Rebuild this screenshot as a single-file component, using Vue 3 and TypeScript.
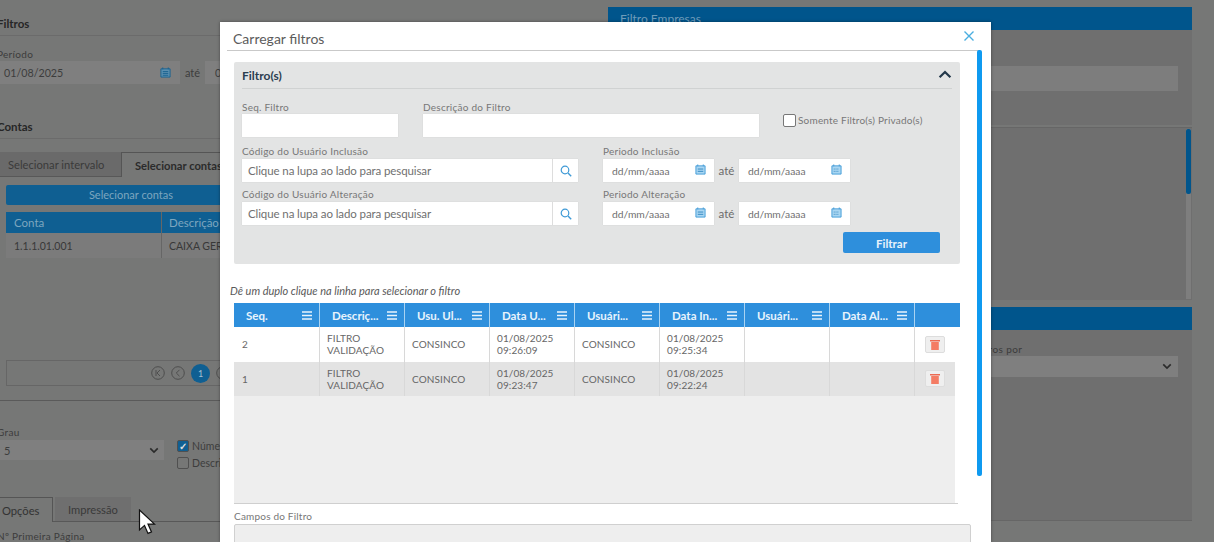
<script setup lang="ts">
interface Row { seq: string; user1: string; d1: string[]; d2: string[] }
const cols: string[] = ['Seq.', 'Descriç...', 'Usu. Ul...', 'Data U...', 'Usuári...', 'Data In...', 'Usuári...', 'Data Al...']
const rows: Row[] = [
  { seq: '2', user1: 'CONSINCO', d1: ['01/08/2025', '09:26:09'], d2: ['01/08/2025', '09:25:34'] },
  { seq: '1', user1: 'CONSINCO', d1: ['01/08/2025', '09:23:47'], d2: ['01/08/2025', '09:22:24'] },
]
const lookups = [
  { label: 'Código do Usuário Inclusão', period: 'Periodo Inclusão' },
  { label: 'Código do Usuário Alteração', period: 'Periodo Alteração' },
]
</script>

<template>
  <div class="page">
    <section class="left">
      <div class="sec-title first">Filtros</div>
      <div class="lbl period-lbl">Período</div>
      <div class="date-row">
        <div class="bg-input wide">01/08/2025
          <svg class="cal" viewBox="0 0 12 12"><path d="M1 2h10v9H1z" fill="#5a8fb0" stroke="#17608f"/><path d="M3 .5v2M9 .5v2" stroke="#17608f"/><path d="M3 5h6M3 7h6M3 9h6" stroke="#17608f"/></svg>
        </div>
        <span class="ate">até</span>
        <div class="bg-input rest">0</div>
      </div>
      <div class="sec-title contas">Contas</div>
      <div class="bg-tabs">
        <span class="bg-tab">Selecionar intervalo</span>
        <span class="bg-tab on">Selecionar contas</span>
      </div>
      <div class="inset">
        <div class="bg-btn">Selecionar contas</div>
        <div class="bg-head"><span class="c1">Conta</span><span class="c2">Descrição</span></div>
        <div class="bg-row"><span class="c1">1.1.1.01.001</span><span class="c2">CAIXA GERAL</span></div>
        <div class="pager">
          <svg class="pg" viewBox="0 0 14 14"><circle cx="7" cy="7" r="6.300" fill="none" stroke="#4e4e4e"/><path d="M5 4v6M9 4 6 7l3 3" fill="none" stroke="#4e4e4e"/></svg>
          <svg class="pg" viewBox="0 0 14 14"><circle cx="7" cy="7" r="6.300" fill="none" stroke="#4e4e4e"/><path d="M8.500 3.800 5.300 7l3.200 3.200" fill="none" stroke="#4e4e4e"/></svg>
          <span class="pg-cur">1</span>
          <svg class="pg" viewBox="0 0 14 14"><circle cx="7" cy="7" r="6.300" fill="none" stroke="#4e4e4e"/></svg>
        </div>
      </div>
      <div class="divider"></div>
      <div class="lbl grau">Grau</div>
      <div class="grau-row">
        <div class="bg-select">5
          <svg class="chev" viewBox="0 0 12 8"><path d="M1.500 1.500 6 6l4.500-4.500" fill="none" stroke="#2b2b2b" stroke-width="2"/></svg>
        </div>
        <div class="checks">
          <div class="chk-line"><span class="bg-chk on">✓</span>Número</div>
          <div class="chk-line"><span class="bg-chk"></span>Descrição</div>
        </div>
      </div>
      <div class="bg-tabs low">
        <span class="bg-tab on small">Opções</span>
        <span class="bg-tab imp">Impressão</span>
      </div>
      <div class="lbl first-page">Nº Primeira Página</div>
    </section>

    <section class="right">
      <div class="r-head">Filtro Empresas</div>
      <div class="r-body top"><div class="r-input"></div></div>
      <div class="r-list"><div class="r-track"><div class="r-thumb"></div></div></div>
      <div class="r-head second"></div>
      <div class="r-body bottom">
        <div class="r-lbl">Agrupar registros por</div>
        <div class="r-select">
          <svg class="chev" viewBox="0 0 12 8"><path d="M1.500 1.500 6 6l4.500-4.500" fill="none" stroke="#2b2b2b" stroke-width="2"/></svg>
        </div>
      </div>
    </section>

    <svg class="cursor" viewBox="0 0 18 26"><path d="M1.500 1v20l5-4.600 3.500 8 3.500-1.500-3.500-7.800h6.500z" fill="#fff" stroke="#111" stroke-width="1.200"/></svg>

    <div class="modal">
      <header class="m-head">
        <h1>Carregar filtros</h1>
        <svg class="close" viewBox="0 0 12 12"><path d="M1.500 1.500l9 9M10.500 1.500l-9 9" stroke="#4aaee0" stroke-width="1.400" fill="none"/></svg>
      </header>
      <div class="m-scroll"></div>
      <div class="m-body">
        <div class="panel">
          <div class="panel-head">
            <span>Filtro(s)</span>
            <svg viewBox="0 0 12 8"><path d="M1.200 6.500 6 1.800l4.800 4.700" fill="none" stroke="#23384a" stroke-width="2"/></svg>
          </div>
          <div class="f-row r1">
            <div class="field seq"><label>Seq. Filtro</label><div class="inp"></div></div>
            <div class="field desc"><label>Descrição do Filtro</label><div class="inp"></div></div>
            <div class="priv"><span class="box"></span>Somente Filtro(s) Privado(s)</div>
          </div>
          <div v-for="l in lookups" :key="l.label" class="f-row r2">
            <div class="field lookup">
              <label>{{ l.label }}</label>
              <div class="inp text">
                <span class="ph">Clique na lupa ao lado para pesquisar</span>
                <span class="addon">
                  <svg viewBox="0 0 12 12"><circle cx="5" cy="5" r="3.800" fill="none" stroke="#3f9ad6" stroke-width="1.200"/><path d="M8 8l3.200 3.200" stroke="#3f9ad6" stroke-width="1.400"/></svg>
                </span>
              </div>
            </div>
            <div class="field period">
              <label>{{ l.period }}</label>
              <div class="dates">
                <div class="inp date"><span class="ph dm">dd/mm/aaaa</span>
                  <svg viewBox="0 0 12 12"><path d="M1 2h10v9H1z" fill="#a9d6f2" stroke="#3f9ad6"/><path d="M3 .5v2M9 .5v2" stroke="#3f9ad6"/><path d="M3 5.500h6M3 8h6" stroke="#2f86c0"/></svg>
                </div>
                <span class="until">até</span>
                <div class="inp date"><span class="ph dm">dd/mm/aaaa</span>
                  <svg viewBox="0 0 12 12"><path d="M1 2h10v9H1z" fill="#a9d6f2" stroke="#3f9ad6"/><path d="M3 .5v2M9 .5v2" stroke="#3f9ad6"/><path d="M3 5.500h6M3 8h6" stroke="#2f86c0" stroke-dasharray="1 1"/></svg>
                </div>
              </div>
            </div>
          </div>
          <div class="actions"><button type="button">Filtrar</button></div>
        </div>

        <p class="hint">Dê um duplo clique na linha para selecionar o filtro</p>

        <div class="grid">
          <div class="g-head">
            <div v-for="(c, i) in cols" :key="i" class="g-th">
              <span>{{ c }}</span>
              <svg viewBox="0 0 10 9"><path d="M0 1h10M0 4.500h10M0 8h10" stroke="#e8f4fc" stroke-width="1.300"/></svg>
            </div>
            <div class="g-th last"></div>
          </div>
          <div class="g-body">
            <div v-for="r in rows" :key="r.seq" class="g-row">
              <div class="g-td">{{ r.seq }}</div>
              <div class="g-td">FILTRO<br />VALIDAÇÃO</div>
              <div class="g-td">{{ r.user1 }}</div>
              <div class="g-td">{{ r.d1[0] }}<br />{{ r.d1[1] }}</div>
              <div class="g-td">{{ r.user1 }}</div>
              <div class="g-td">{{ r.d2[0] }}<br />{{ r.d2[1] }}</div>
              <div class="g-td"></div>
              <div class="g-td"></div>
              <div class="g-td act">
                <span class="trash">
                  <svg viewBox="0 0 10 11"><path d="M0 1h10v1.500H0z" fill="#ec6a52"/><path d="M1.200 3h7.600v8H1.200z" fill="#f47c64"/></svg>
                </span>
              </div>
            </div>
          </div>
          <div class="g-line"></div>
        </div>

        <div class="campos-lbl">Campos do Filtro</div>
        <div class="campos"></div>
      </div>
    </div>
  </div>
</template>

<style>
html, body { margin: 0; background: #767776; }
</style>

<style scoped>
.page {
  position: relative;
  display: flex;
  width: 1214px;
  height: 542px;
  overflow: hidden;
  background: #767776;
  font-family: Lato, "Open Sans", sans-serif;
  color: #3d3d3d;
}
.left {
  flex: none;
  width: 596px;
  margin-left: -6px;
  font-size: 11px;
}
.sec-title {
  height: 21px;
  padding-left: 3px;
  border-bottom: 1px solid #6b6b6b;
  box-sizing: border-box;
  font-weight: 700;
  font-size: 11.500px;
  color: #262626;
  line-height: 17px;
}
.first { margin-top: 15px; }
.lbl { font-size: 10px; line-height: 10px; color: #3c3c3c; padding-left: 3px; letter-spacing: .3px; }
.period-lbl { margin-top: 13px; }
.date-row { display: flex; align-items: center; margin-top: 2px; height: 23px; }
.bg-input {
  position: relative;
  display: flex;
  align-items: center;
  height: 23px;
  background: #7f7f7f;
  font-size: 10.700px;
  padding-left: 10px;
  box-sizing: border-box;
}
.wide { width: 186px; }
.rest { width: 30px; }
.cal { position: absolute; right: 9px; top: 6px; width: 11px; height: 11px; }
.ate { width: 25px; text-align: center; font-size: 11px; }
.contas { margin-top: 34px; }
.bg-tabs { display: flex; height: 25px; margin-top: 13px; border-bottom: 1px solid #585858; font-size: 11.200px; box-sizing: border-box; }
.bg-tab {
  display: flex;
  align-items: center;
  width: 127px;
  padding-left: 14px;
  box-sizing: border-box;
  background: #6a6a6a;
  color: #3a3a3a;
}
.bg-tab.on {
  width: 110px;
  padding-left: 13px;
  background: #767776;
  border: 1px solid #555;
  border-bottom: 0;
  height: 25px;
  font-weight: 700;
  color: #2b2b2b;
}
.inset {
  margin: 0 0 0 12px;
  padding-top: 8px;
  height: 209px;
  width: 580px;
  box-sizing: border-box;
  font-size: 10.500px;
}
.bg-btn {
  height: 20px;
  line-height: 20px;
  width: 250px;
  text-align: center;
  background: #0f5f92;
  color: #7da6bf;
  border-radius: 2px;
  font-size: 11px;
}
.bg-head, .bg-row { display: flex; align-items: center; }
.bg-head { margin-top: 7px; height: 21px; background: #0f5f92; color: #7da6bf; font-size: 11.500px; }
.bg-row { height: 25px; background: #7b7b7b; color: #383838; }
.c1 { width: 156px; padding-left: 8px; box-sizing: border-box; border-right: 1px solid #666; height: 100%; display: flex; align-items: center; }
.c2 { padding-left: 7px; }
.pager {
  display: flex;
  align-items: center;
  gap: 6px;
  margin-top: 102px;
  height: 26px;
  padding-left: 144px;
  border: 1px solid #666;
  box-sizing: border-box;
}
.pg { width: 14px; height: 14px; flex: none; }
.pg-cur {
  flex: none;
  width: 19px;
  height: 19px;
  border-radius: 50%;
  background: #0f5f92;
  color: #a4c0d2;
  font-size: 9px;
  line-height: 19px;
  text-align: center;
}
.divider { margin-top: 14px; height: 1px; background: #5a5a5a; }
.grau { margin-top: 26px; }
.grau-row { display: flex; height: 20px; margin-top: 3px; font-size: 10.500px; }
.bg-select {
  position: relative;
  width: 170px;
  height: 20px;
  line-height: 21px;
  padding-left: 10px;
  box-sizing: border-box;
  background: #7f7f7f;
  font-size: 11px;
}
.chev { position: absolute; right: 5px; top: 7px; width: 10px; height: 7px; }
.checks { margin-left: 13px; margin-top: -2px; }
.chk-line { display: flex; align-items: center; height: 16.500px; gap: 3px; }
.bg-chk {
  width: 12px;
  height: 12px;
  border: 1px solid #505050;
  border-radius: 2px;
  box-sizing: border-box;
  font-size: 10px;
  line-height: 10px;
  text-align: center;
  color: #ddd;
}
.bg-chk.on { background: #0f5f92; font-weight: 700; }
.low { margin-top: 37px; }
.bg-tab.on.small { width: 59px; padding-left: 7px; font-weight: 400; color: #333; }
.bg-tab.imp { width: 76px; margin-left: 2px; padding-left: 13px; background: #6f6f6f; }
.first-page { margin-top: 9px; }
.right { flex: none; width: 584px; margin-left: 18px; padding-top: 7px; }
.r-head {
  height: 23px;
  line-height: 23px;
  padding-left: 12px;
  background: #00558c;
  color: #6f9cba;
  font-size: 12px;
}
.r-body { background: #6f6f6f; }
.top { height: 95px; padding-top: 36px; box-sizing: border-box; }
.r-input { height: 25px; margin: 0 14px 0 100px; background: #7d7d7d; }
.r-list { position: relative; height: 173px; margin-top: 2px; background: #6f6f6f; border-top: 1px solid #666; box-sizing: border-box; }
.r-track { position: absolute; right: 1px; top: 1px; bottom: 1px; width: 5px; background: #7e7e7e; }
.r-thumb { height: 65px; border-radius: 2px; background: #00558c; }
.second { margin-top: 7px; }
.bottom { height: 191px; padding-top: 14px; box-sizing: border-box; border-bottom: 1px solid #666; }
.r-lbl { font-size: 10px; line-height: 11px; color: #3b3b3b; text-align: left; padding-left: 313px; letter-spacing: .4px; }
.r-select { position: relative; height: 21px; margin: 1px 14px 0 100px; background: #7f7f7f; }
.r-select .chev { right: 6px; top: 7px; }
.cursor { position: absolute; left: 138px; top: 509px; width: 18px; height: 26px; }

.modal {
  position: absolute;
  left: 220px;
  top: 22px;
  width: 771px;
  height: 520px;
  background: #fff;
  color: #666;
  box-shadow: 0 0 3px rgba(0, 0, 0, .4);
}
.m-head {
  position: relative;
  height: 28px;
  margin: 0 11px 0 7px;
  border-bottom: 1px solid #c9c9c9;
}
.m-head h1 {
  margin: 0;
  padding: 8px 0 0 6px;
  font-size: 14px;
  line-height: 17px;
  font-weight: 400;
  color: #5c5c5c;
}
.close { position: absolute; right: 5px; top: 8px; width: 12px; height: 12px; }
.m-scroll {
  position: absolute;
  left: 757px;
  top: 28px;
  width: 5px;
  height: 426px;
  border-radius: 2px;
  background: #0f9af0;
}
.m-body { padding: 11px 0 0 14px; width: 737px; }
.panel {
  width: 726px;
  height: 202px;
  padding: 0 8px;
  box-sizing: border-box;
  background: #e3e4e4;
  border-radius: 2px;
}
.panel-head {
  display: flex;
  justify-content: space-between;
  align-items: center;
  height: 26px;
  border-bottom: 1px solid #d0d2d2;
  font-size: 12px;
  font-weight: 700;
  color: #2b3e50;
}
.panel-head svg { width: 14px; height: 9px; margin-top: -2px; }
.f-row { display: flex; }
.r1 { margin-top: 12px; }
.r2 { margin-top: 8px; }
.r2 + .r2 { margin-top: 6px; }
.field label {
  display: block;
  height: 13px;
  font-size: 10px;
  line-height: 12px;
  letter-spacing: .25px;
  color: #777;
}
.inp {
  display: flex;
  align-items: center;
  height: 23px;
  background: #fff;
  box-shadow: 0 0 1px rgba(0, 0, 0, .12);
  box-sizing: border-box;
}
.field.seq { width: 156px; margin-right: 25px; }
.field.desc { width: 336px; margin-right: 24px; }
.priv {
  display: flex;
  align-items: center;
  height: 12px;
  margin-top: 13px;
  gap: 2px;
  font-size: 10px;
  letter-spacing: .2px;
  color: #777;
  white-space: nowrap;
}
.box { width: 11px; height: 11px; background: #fff; border: 1px solid #777; border-radius: 2px; flex: none; }
.field.lookup { width: 336px; margin-right: 25px; }
.field.lookup label, .field.period label { height: 14px; line-height: 12px; }
.text { justify-content: space-between; padding-left: 6px; }
.ph { font-size: 11.500px; color: #707070; letter-spacing: -.1px; white-space: nowrap; }
.ph.dm { font-size: 10.300px; letter-spacing: 0; }
.addon {
  display: flex;
  align-items: center;
  justify-content: center;
  width: 26px;
  height: 23px;
  border-left: 1px solid #ddd;
  box-sizing: border-box;
}
.addon svg { width: 12px; height: 12px; }
.dates { display: flex; align-items: center; }
.date { width: 111px; padding: 0 8px 0 9px; justify-content: space-between; }
.date svg { width: 11px; height: 11px; margin-top: -2px; }
.until { width: 25px; text-align: center; font-size: 11.500px; color: #6b6b6b; }
.actions { display: flex; justify-content: flex-end; padding: 7px 12px 0 0; }
.actions button {
  width: 97px;
  height: 21px;
  padding: 1px 0 0;
  border: 0;
  border-radius: 2px;
  background: #2e8fdc;
  color: #e8f3fb;
  font: 700 11.500px Lato, "Open Sans", sans-serif;
}
.hint {
  margin: 20px 0 0 -4px;
  height: 14px;
  font-size: 11px;
  line-height: 14px;
  font-style: italic;
  color: #595959;
}
.grid { margin-top: 5px; width: 726px; }
.g-head { display: flex; height: 24px; background: #2e8fdc; }
.g-th {
  display: flex;
  align-items: center;
  justify-content: space-between;
  width: 85px;
  padding: 0 7px 0 12px;
  box-sizing: border-box;
  border-right: 1px solid #a9d3f2;
  font-size: 11.500px;
  font-weight: 700;
  color: #e8f4fc;
  white-space: nowrap;
}
.g-th:first-child { width: 86px; }
.g-th svg { width: 10px; height: 9px; flex: none; }
.g-th.last { width: 45px; border: 0; padding: 0; }
.g-body { width: 721px; height: 176px; background: #eee; }
.g-line { width: 724px; height: 1px; background: #cfcfcf; }
.g-row { display: flex; height: 34.500px; background: #fff; }
.g-row:nth-child(2) { background: #e3e3e3; }
.g-td {
  display: flex;
  align-items: center;
  width: 85px;
  padding-left: 7px;
  box-sizing: border-box;
  border-right: 1px solid #d8d8d8;
  font-size: 10px;
  line-height: 12px;
  letter-spacing: .1px;
  color: #666;
}
.g-td:first-child { width: 86px; padding-left: 8px; }
.g-td.act { width: 40px; border: 0; padding-left: 10px; }
.trash {
  display: flex;
  align-items: center;
  justify-content: center;
  width: 20px;
  height: 17px;
  background: #efefef;
  border: 1px solid #ddd;
  border-radius: 2px;
  box-sizing: border-box;
}
.trash svg { width: 10px; height: 11px; }
.campos-lbl {
  margin-top: 6px;
  height: 14px;
  font-size: 10px;
  line-height: 13px;
  letter-spacing: .2px;
  color: #777;
}
.campos {
  width: 737px;
  height: 30px;
  background: #eee;
  border: 1px solid #d0d0d0;
  border-radius: 2px;
  box-sizing: border-box;
}
</style>
